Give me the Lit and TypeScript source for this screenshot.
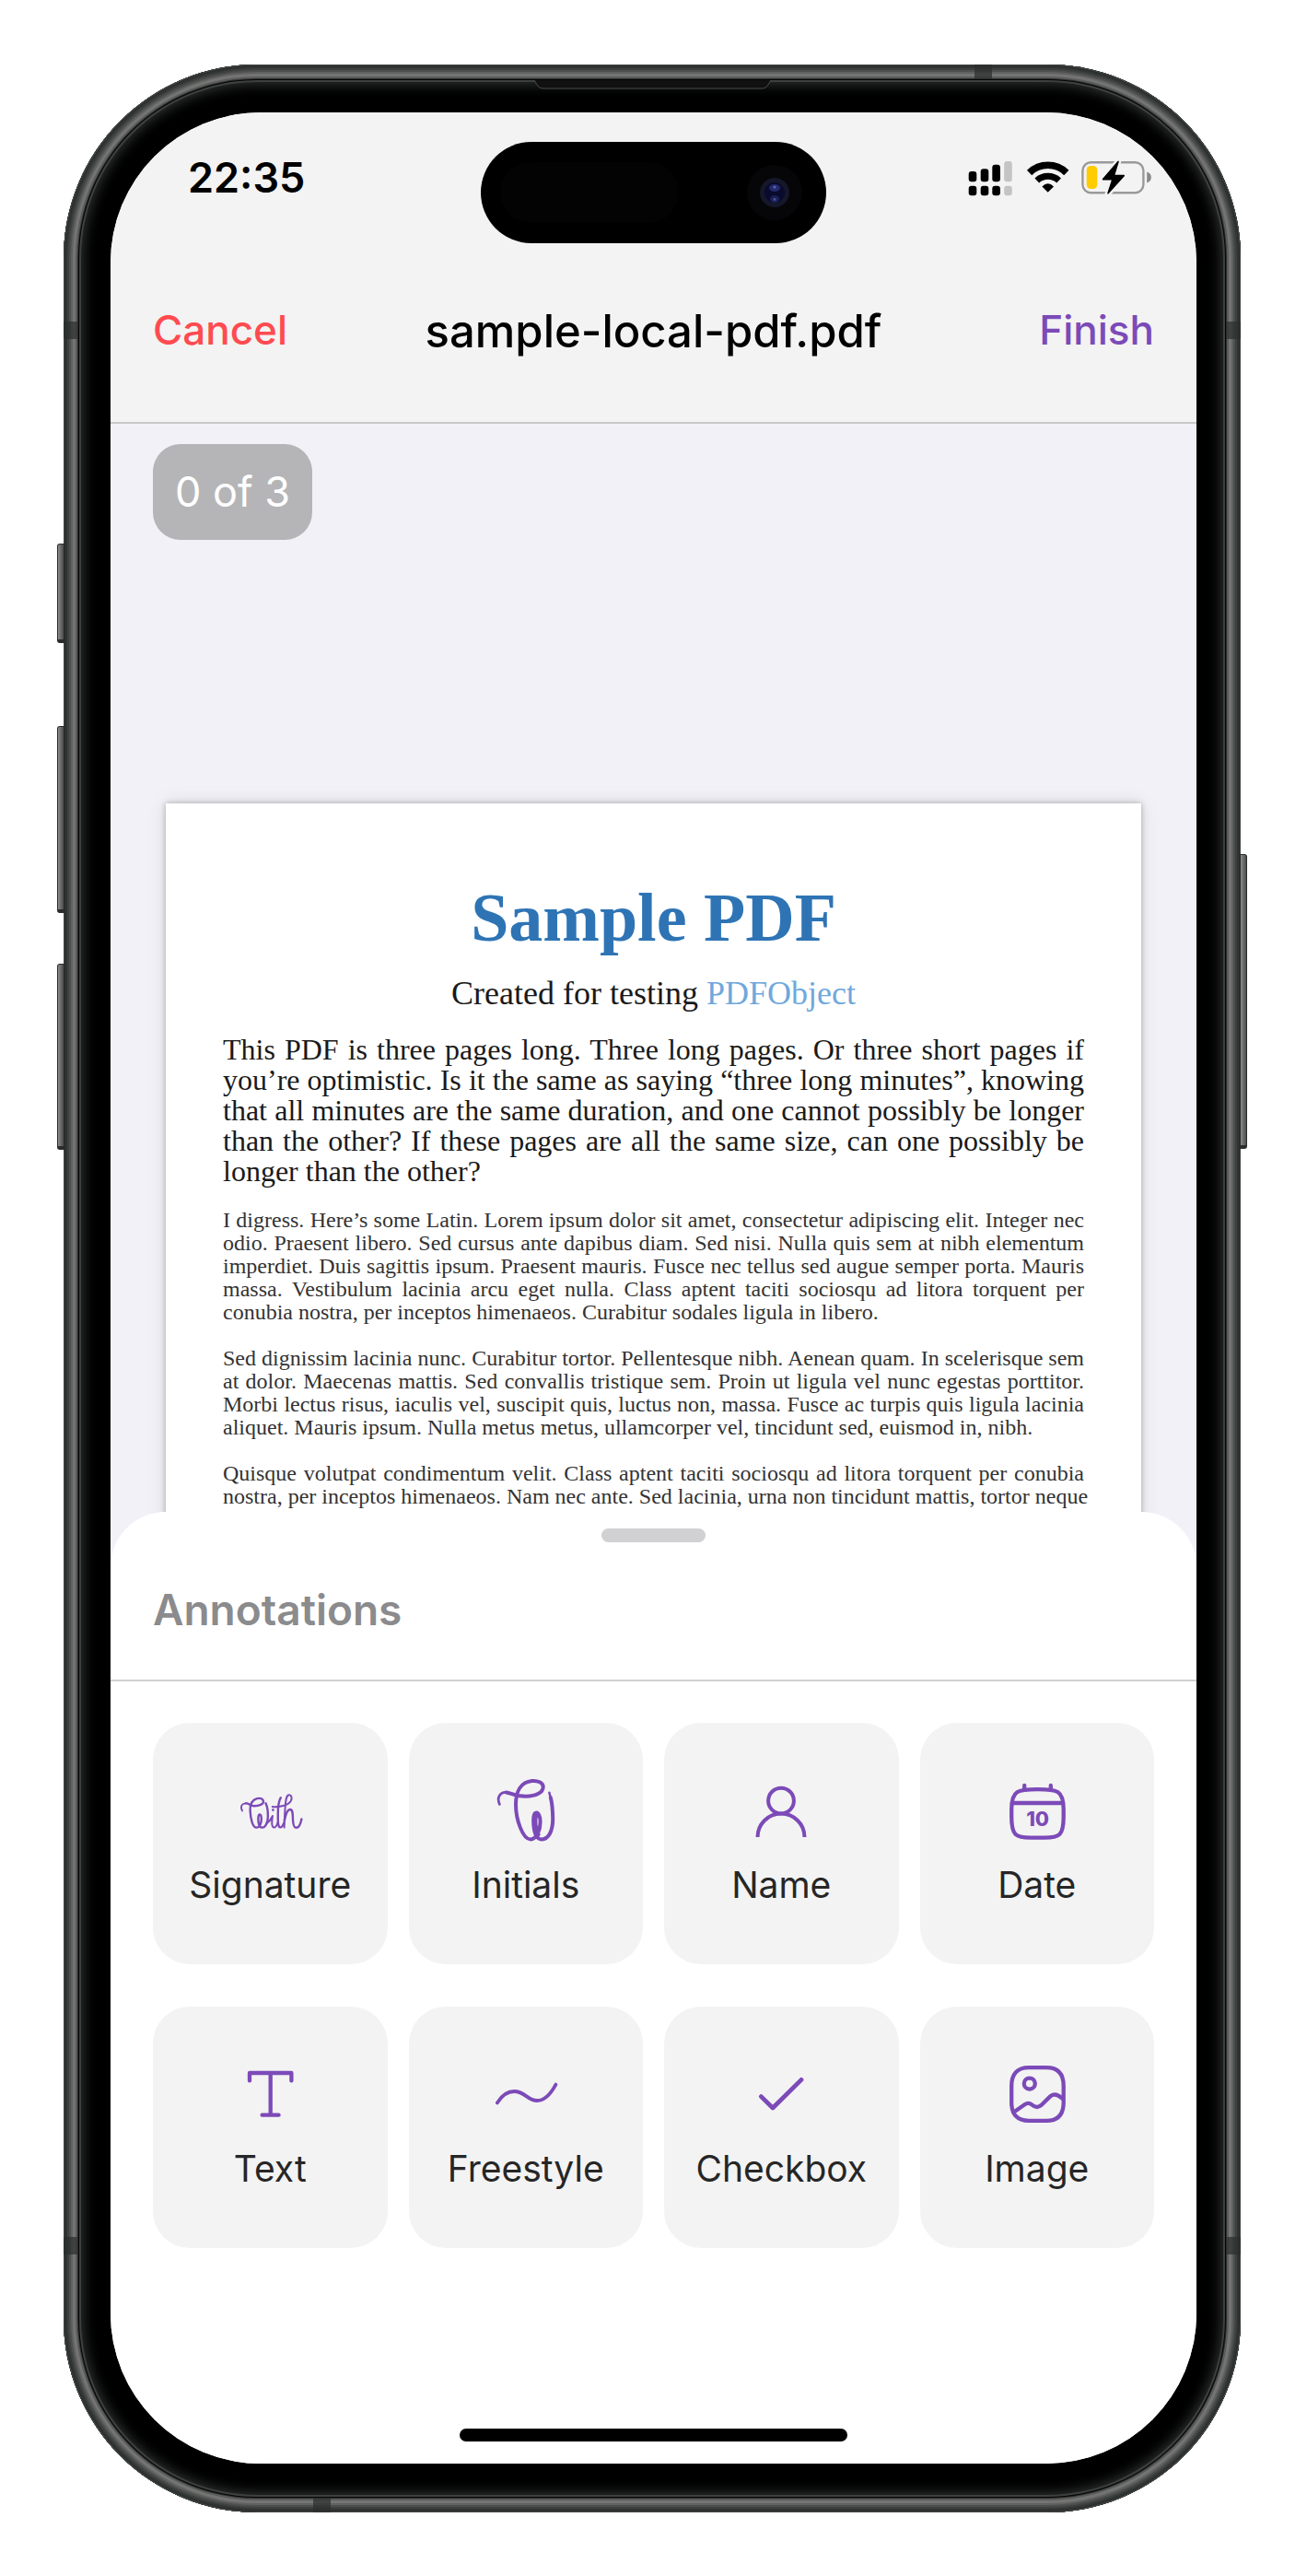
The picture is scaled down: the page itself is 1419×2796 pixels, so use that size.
import { LitElement, html, css, svg } from "lit";
import { customElement, property } from "lit/decorators.js";

const icons: Record<string, unknown> = {
  signature: svg`<g stroke-width="2.4">
    <path stroke-width="1.8" d="M6 35.5 C3.5 31 5.5 27.3 10 27.3"/>
    <path d="M10 27.3 C14 27.4 14.5 30.2 19 30.2 C24 30.2 29.4 28.5 29 25 C28.6 22 25 21.4 22 22.2 C16.5 23.8 14.4 28 14.6 35 C15 45 17.5 53.6 21.4 53.6 C25 53.6 26.8 49 26.8 44.5 C26.8 41 26 39.4 25 39.4 C23.2 39.4 23.2 44 23.6 47.5 C24 51.5 25.4 53.6 27.6 53.6 C31.5 53.6 33.8 48 33.9 41.5 C34 35.5 33 30.5 31.5 27.3"/>
    <path stroke-width="2" d="M32 49.5 C35 47.5 37.4 44.6 39 41 C38.2 45 37.2 53.6 40.6 53.6 C42.6 53.6 43.6 51 44.4 48.5"/>
    <path d="M39.4 34.2 V34.8"/>
    <path d="M47.8 21.2 C44.8 26 44.8 31 44.8 38 C44.8 46 44.4 53.4 47.4 53.4 C49.4 53.4 50.4 51 51.4 48.4"/>
    <path stroke-width="2" d="M38.8 31 C44 31.6 55 30.6 58.6 25 C60.6 21.6 59.4 18 56.8 18.2 C54 18.4 53.4 23 52.8 29 C52.2 37 51.8 46 51.6 53.6"/>
    <path d="M51.8 46 C53 40 55 34 58 34 C61 34 60.8 39 61 45 C61.2 50 61.8 53.8 64.4 53.8 C67.6 53.8 69.4 49.5 70.4 44.4"/>
  </g>`,
  initials: svg`<g stroke-width="4">
    <path stroke-width="2.8" d="M7.4 28.4 C4 21 8 15.2 14.4 15.4"/>
    <path d="M14.4 15.4 C20 15.7 22 19.7 36 19.7 C47 19.7 54.7 15.4 54.7 9.4 C54.7 4.8 48.5 2.4 42.6 3 C31 4.2 25 13.5 25 28.5 C25 45 32.5 66.4 41 66.4 C48 66.4 51.6 55.5 51.6 47.4 C51.6 41.4 49.6 37.6 47.4 37.6 C44 37.6 43.8 45 44.4 51.6 C45.2 60 48 66.4 53 66.4 C60.4 66.4 65.4 57.5 65.2 43.5 C65 33 64 25.5 62.8 21"/>
    <path stroke-width="2.6" d="M62.9 22 L61.4 15.8"/>
    <path stroke-width="5" d="M46.8 40 C45 46 46.5 55 49 61"/>
  </g>`,
  name: svg`<g stroke-width="4" stroke-linecap="butt">
    <circle cx="36" cy="24.6" r="13.9"/>
    <path d="M10.5 64 A25.5 25.5 0 0 1 61.5 64"/>
  </g>`,
  date: svg`<g stroke-width="4.3">
    <path d="M36.5 12.2 C58 12.2 64.7 13 64.7 34 V42 C64.7 62.5 60 64.6 44 64.6 H29 C13 64.6 8.2 62.5 8.2 42 V34 C8.2 13 15 12.2 36.5 12.2 Z"/>
    <path d="M9 27 H64 M22.2 8 V11 M50.8 8 V11"/>
    <text x="36.6" y="52" class="day">10</text>
  </g>`,
  text: svg`<g stroke-width="4.3">
    <path d="M14 20.4 V12 H59.4 V20.4 M36.7 12 V57.7 M27.6 57.7 H45.6"/>
  </g>`,
  freestyle: svg`<g stroke-width="3.8">
    <path d="M4.8 44.4 C10 36 17 32 23.4 32 C35 32 37.4 42 48.3 42 C57 42 63 34.5 68.4 24.6"/>
  </g>`,
  checkbox: svg`<g stroke-width="4.8">
    <path d="M14.4 37.6 L27 50 L58 19.4"/>
  </g>`,
  image: svg`<g stroke-width="4.3">
    <path d="M27 6.2 H46 C58.5 6.2 64.7 13 64.7 26 V44 C64.7 57 58.5 63.9 46 63.9 H27 C14.5 63.9 8.2 57 8.2 44 V26 C8.2 13 14.5 6.2 27 6.2 Z"/>
    <circle cx="27.8" cy="23.6" r="6"/>
    <path d="M10.4 54.8 L22.5 46.2 Q26.6 43.4 30.2 46.4 Q36 51.4 41 46.4 L50 37.6 Q55.4 32.6 63.6 40"/>
  </g>`,
};

@customElement("annotation-tile")
export class AnnotationTile extends LitElement {
  @property() icon = "";
  @property() label = "";

  static styles = css`
    :host {
      display: block;
    }
    .tile {
      box-sizing: border-box;
      width: 100%;
      display: flex;
      flex-direction: column;
      align-items: center;
      gap: 20px;
      padding: 60px 0 62px;
      border: 0;
      border-radius: 40px;
      background: #f3f3f3;
      color: #262626;
      font: 400 39px/48px Inter, "Liberation Sans", sans-serif;
      cursor: pointer;
    }
    .icon {
      width: 72px;
      height: 72px;
      fill: none;
      stroke: #7c4ab8;
      stroke-linecap: round;
      stroke-linejoin: round;
    }
    .day {
      font: 800 22px Inter, sans-serif;
      text-anchor: middle;
      fill: #7c4ab8;
      stroke: none;
    }
  `;

  render() {
    return html`<button class="tile" type="button">
      <svg class="icon" viewBox="0 0 72 72" aria-hidden="true">${icons[this.icon]}</svg>
      <span>${this.label}</span>
    </button>`;
  }
}

@customElement("status-bar")
export class StatusBar extends LitElement {
  static styles = css`
    :host {
      display: flex;
      justify-content: space-between;
      align-items: center;
      padding: 50px 48px 44px 84px;
    }
    .time {
      font: 600 45px/42px Inter, "Liberation Sans", sans-serif;
      color: #000;
    }
    .indicators {
      width: 200px;
      height: 42px;
    }
  `;

  render() {
    return html`
      <span class="time">22:35</span>
      <svg class="indicators" viewBox="0 0 200 42" aria-hidden="true">
        <g fill="#000">
          <rect x="0.7" y="14" width="8.6" height="11.3" rx="3" />
          <rect x="13.7" y="11.3" width="8.6" height="14" rx="3" />
          <rect x="26.3" y="6.7" width="8.6" height="18.6" rx="3" />
          <rect x="0.7" y="29.8" width="8.6" height="10.4" rx="3" />
          <rect x="13.7" y="29.8" width="8.6" height="10.4" rx="3" />
          <rect x="26.3" y="29.8" width="8.6" height="10.4" rx="3" />
        </g>
        <g fill="#c4c4c4">
          <rect x="39.2" y="3" width="8.6" height="22.3" rx="3" />
          <rect x="39.2" y="29.8" width="8.6" height="10.4" rx="3" />
        </g>
        <g fill="none" stroke="#000">
          <path stroke-width="7.6" d="M66.6 15.4 A29 29 0 0 1 106.8 15.4" />
          <path stroke-width="7" d="M74.8 24 A17.6 17.6 0 0 1 98.6 24" />
        </g>
        <path d="M80.4 30.4 Q86.7 24.2 93 30.4 L86.7 36.8 Z" />
        <rect x="124.4" y="4.2" width="66" height="33" rx="9" fill="none" stroke="#9a9a9a" stroke-width="2.4" />
        <path d="M194.2 14.6 Q198.8 16 198.8 20.5 Q198.8 25 194.2 26.4 Z" fill="#8a8a8a" />
        <rect x="128.7" y="8" width="11.6" height="25" rx="4.4" fill="#fc0" />
        <path
          d="M163.4 2.6 L145.8 23 H156.4 L151.4 38.8 L170 18.2 H158.8 Z"
          stroke="#f3f3f3"
          stroke-width="6"
          stroke-linejoin="round"
        />
        <path
          d="M163 3.4 L146.6 22.6 H157 L152 37.8 L169.2 18.6 H158.4 Z"
          stroke="#000"
          stroke-width="1.6"
          stroke-linejoin="round"
        />
      </svg>
    `;
  }
}

interface Paragraph {
  lines: string[];
  last: boolean;
}

const intro: Paragraph = {
  last: true,
  lines: [
    "This PDF is three pages long. Three long pages. Or three short pages if",
    "you’re optimistic. Is it the same as saying “three long minutes”, knowing",
    "that all minutes are the same duration, and one cannot possibly be longer",
    "than the other? If these pages are all the same size, can one possibly be",
    "longer than the other?",
  ],
};

const body: Paragraph[] = [
  {
    last: true,
    lines: [
      "I digress. Here’s some Latin. Lorem ipsum dolor sit amet, consectetur adipiscing elit. Integer nec",
      "odio. Praesent libero. Sed cursus ante dapibus diam. Sed nisi. Nulla quis sem at nibh elementum",
      "imperdiet. Duis sagittis ipsum. Praesent mauris. Fusce nec tellus sed augue semper porta. Mauris",
      "massa. Vestibulum lacinia arcu eget nulla. Class aptent taciti sociosqu ad litora torquent per",
      "conubia nostra, per inceptos himenaeos. Curabitur sodales ligula in libero.",
    ],
  },
  {
    last: true,
    lines: [
      "Sed dignissim lacinia nunc. Curabitur tortor. Pellentesque nibh. Aenean quam. In scelerisque sem",
      "at dolor. Maecenas mattis. Sed convallis tristique sem. Proin ut ligula vel nunc egestas porttitor.",
      "Morbi lectus risus, iaculis vel, suscipit quis, luctus non, massa. Fusce ac turpis quis ligula lacinia",
      "aliquet. Mauris ipsum. Nulla metus metus, ullamcorper vel, tincidunt sed, euismod in, nibh.",
    ],
  },
  {
    last: false,
    lines: [
      "Quisque volutpat condimentum velit. Class aptent taciti sociosqu ad litora torquent per conubia",
      "nostra, per inceptos himenaeos. Nam nec ante. Sed lacinia, urna non tincidunt mattis, tortor neque",
    ],
  },
];

@customElement("pdf-page")
export class PdfPage extends LitElement {
  static styles = css`
    :host {
      display: block;
      padding: 83px 62px 64px;
      background: #fff;
      box-shadow: 0 0 6px rgba(0, 0, 0, 0.28), 0 0 20px rgba(0, 0, 0, 0.1);
      font-family: "Century Schoolbook", "Liberation Serif", serif;
      color: #1a1a1a;
    }
    .title {
      margin: 0;
      font-size: 74px;
      line-height: 82px;
      font-weight: 700;
      text-align: center;
      color: #2e74b5;
    }
    .subtitle {
      margin: 20px 0 24px;
      font-size: 36px;
      line-height: 42px;
      text-align: center;
    }
    .link {
      color: #6fa8dc;
      text-decoration: none;
    }
    .intro {
      margin: 0 0 24px;
      font-size: 32px;
      line-height: 33px;
    }
    .small {
      margin: 0 0 25px;
      font-size: 24px;
      line-height: 25px;
      color: #333;
    }
    .small:last-child {
      margin-bottom: 0;
    }
    .line {
      display: block;
      white-space: nowrap;
      text-align-last: justify;
    }
    .line.end {
      text-align-last: left;
    }
  `;

  private lines(p: Paragraph) {
    return p.lines.map(
      (t, i) => html`<span class=${p.last && i === p.lines.length - 1 ? "line end" : "line"}>${t} </span>`
    );
  }

  render() {
    return html`
      <h2 class="title">Sample PDF</h2>
      <p class="subtitle">Created for testing <a class="link" href="#pdfobject">PDFObject</a></p>
      <p class="intro">${this.lines(intro)}</p>
      ${body.map((p) => html`<p class="small">${this.lines(p)}</p>`)}
    `;
  }
}

const tiles = [
  ["signature", "Signature"],
  ["initials", "Initials"],
  ["name", "Name"],
  ["date", "Date"],
  ["text", "Text"],
  ["freestyle", "Freestyle"],
  ["checkbox", "Checkbox"],
  ["image", "Image"],
];

@customElement("app-root")
export class AppRoot extends LitElement {
  static styles = css`
    :host {
      display: block;
      background: #fff;
      font-family: Inter, "Liberation Sans", sans-serif;
      padding: 70px 72px 70px 69px;
    }
    .phone {
      position: relative;
      padding: 52px 48px 53px 51px;
      border-radius: 210px;
      background: #000;
      box-shadow: inset 0 0 0 1px #484b4a, inset 0 0 0 2px #282c2b, inset 0 0 0 4px #303433,
        inset 0 0 0 6px #3d403f, inset 0 0 0 8px #4d4f4e, inset 0 0 0 10px #606161,
        inset 0 0 0 13px #747473, inset 0 0 0 15px #5a5b5a, inset 0 0 0 16px #2c2e2d,
        inset 0 0 0 17px #050505, inset 0 0 0 19px #3c403f, inset 0 0 14px 21px #333635;
    }
    .key {
      position: absolute;
      width: 8px;
      box-sizing: border-box;
      border: 1px solid #2b2d2c;
      border-bottom-width: 4px;
      background: linear-gradient(90deg, #8a8b8a, #4a4c4b);
    }
    .key.left {
      left: -7px;
      border-radius: 3px 0 0 3px;
    }
    .key.right {
      right: -7px;
      border-radius: 0 3px 3px 0;
    }
    .action {
      top: 520px;
      height: 108px;
    }
    .vol-up {
      top: 718px;
      height: 203px;
    }
    .vol-down {
      top: 976px;
      height: 202px;
    }
    .power {
      top: 857px;
      height: 320px;
    }
    .band {
      position: absolute;
      background: rgba(42, 45, 44, 0.7);
    }
    .band.side {
      width: 16px;
      height: 19px;
    }
    .band.edge {
      width: 19px;
      height: 16px;
    }
    .band.l {
      left: 0;
    }
    .band.r {
      right: 0;
    }
    .band.high {
      top: 279px;
    }
    .band.low {
      bottom: 280px;
    }
    .band.up {
      top: 0;
      right: 270px;
    }
    .band.down {
      bottom: 0;
      left: 271px;
    }
    .earpiece {
      position: absolute;
      top: 17px;
      left: 50%;
      width: 257px;
      height: 10px;
      margin-left: -128px;
    }
    .island {
      position: absolute;
      top: 84px;
      left: 50%;
      width: 375px;
      height: 110px;
      margin-left: -186px;
    }
    .screen {
      overflow: hidden;
      border-radius: 163px;
      background: #fff;
    }
    .header {
      background: #f3f3f3;
      border-bottom: 2px solid #c8c8ca;
    }
    .nav {
      display: grid;
      grid-template-columns: 1fr auto 1fr;
      align-items: center;
      height: 200px;
      padding: 0 46px;
    }
    .action-btn {
      justify-self: start;
      padding: 0;
      border: 0;
      background: none;
      font: 500 44px/56px Inter, "Liberation Sans", sans-serif;
      color: #ff4b50;
      cursor: pointer;
    }
    .action-btn.finish {
      justify-self: end;
      color: #7c4ab8;
    }
    .file {
      margin: 0;
      padding-top: 4px;
      font-size: 49px;
      line-height: 60px;
      font-weight: 500;
      color: #000;
    }
    .viewer {
      background: #f2f1f7;
      padding: 22px 60px 0 60px;
      display: flow-root;
    }
    .badge {
      display: block;
      width: max-content;
      margin: 0 0 286px -14px;
      padding: 22px 24px;
      border-radius: 30px;
      background: #b5b5b7;
      color: #fff;
      font-size: 45px;
      line-height: 60px;
    }
    .sheet {
      position: relative;
      margin-top: -60px;
      padding-top: 18px;
      border-radius: 60px 60px 0 0;
      background: #fff;
    }
    .grabber {
      width: 113px;
      height: 15px;
      margin: 0 auto;
      border-radius: 8px;
      background: #d1d1d3;
    }
    .sheet-title {
      margin: 0;
      padding: 43px 46px 46px;
      border-bottom: 2px solid #d0d0d2;
      font-size: 46px;
      line-height: 60px;
      font-weight: 600;
      color: #8b8b8d;
    }
    .grid {
      display: grid;
      grid-template-columns: repeat(4, 1fr);
      gap: 46px 23px;
      padding: 45px 46px 196px;
    }
    .home {
      width: 421px;
      height: 14px;
      margin: 0 auto;
      border-radius: 7px;
      background: #000;
    }
    .foot {
      padding-bottom: 24px;
    }
  `;

  render() {
    return html`
      <main class="phone">
        <span class="key left action"></span>
        <span class="key left vol-up"></span>
        <span class="key left vol-down"></span>
        <span class="key right power"></span>
        <span class="band side l high"></span>
        <span class="band side r high"></span>
        <span class="band side l low"></span>
        <span class="band side r low"></span>
        <span class="band edge up"></span>
        <span class="band edge down"></span>
        <svg class="earpiece" viewBox="0 0 257 10" aria-hidden="true">
          <path d="M0 0 L3 5 Q5 9 9 9 H248 Q252 9 254 5 L257 0" fill="#111" stroke="#4a4a4a" />
        </svg>
        <div class="screen">
          <header class="header">
            <status-bar></status-bar>
            <nav class="nav">
              <button class="action-btn" type="button">Cancel</button>
              <h1 class="file">sample-local-pdf.pdf</h1>
              <button class="action-btn finish" type="button">Finish</button>
            </nav>
          </header>
          <section class="viewer">
            <span class="badge">0 of 3</span>
            <pdf-page></pdf-page>
          </section>
          <section class="sheet">
            <div class="grabber"></div>
            <h2 class="sheet-title">Annotations</h2>
            <div class="grid">
              ${tiles.map(([icon, label]) => html`<annotation-tile icon=${icon} label=${label}></annotation-tile>`)}
            </div>
            <div class="foot"><div class="home"></div></div>
          </section>
        </div>
        <svg class="island" viewBox="0 0 375 110" aria-hidden="true">
          <rect width="375" height="110" rx="55" />
          <rect x="21" y="22" width="194" height="66" rx="33" fill="#030303" />
          <circle cx="319" cy="55" r="30" fill="#060508" />
          <circle cx="319" cy="55" r="16" fill="#15172a" />
          <circle cx="319" cy="55" r="11" fill="#0a0b2c" />
          <ellipse cx="319" cy="50" rx="6" ry="4" fill="#232a6c" />
          <ellipse cx="319" cy="62" rx="5" ry="4" fill="#1b215a" />
          <circle cx="319" cy="49" r="1.6" fill="#5a62b0" />
          <circle cx="319" cy="62.5" r="1.4" fill="#505680" />
        </svg>
      </main>
    `;
  }
}
